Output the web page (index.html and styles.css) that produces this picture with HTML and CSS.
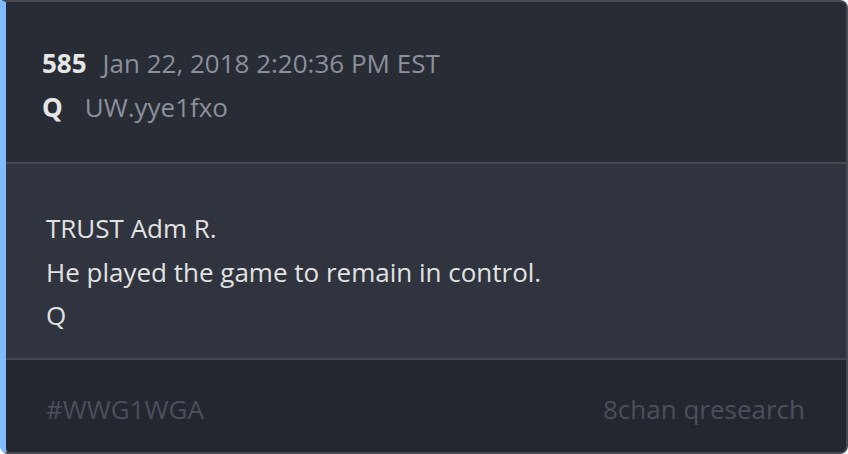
FILE: index.html
```html
<!DOCTYPE html>
<html>
<head>
<meta charset="utf-8">
<link rel="stylesheet" href="styles.css">
</head>
<body>
<div class="card">
  <div class="head">
    <div class="row"><span class="num">585</span><span class="meta">Jan 22, 2018 2:20:36 PM EST</span></div>
    <div class="row"><span class="num q">Q</span><span class="meta">UW.yye1fxo</span></div>
  </div>
  <div class="body">
    <p>TRUST Adm R.</p>
    <p>He played the game to remain in control.</p>
    <p>Q</p>
  </div>
  <div class="foot">
    <span>#WWG1WGA</span>
    <span>8chan qresearch</span>
  </div>
</div>
</body>
</html>
```
FILE: styles.css
```css
html, body { margin: 0; padding: 0; background: #ffffff; }
body { width: 848px; height: 454px; font-family: "Open Sans", "DejaVu Sans", sans-serif; }
.card {
  box-sizing: border-box;
  width: 848px;
  height: 454px;
  border: 2px solid #464a53;
  border-left: 6px solid #7dbcff;
  border-radius: 0 8px 8px 8px;
  background: #2f343e;
  display: flex;
  flex-direction: column;
  overflow: hidden;
}
.head {
  background: #282c35;
  height: 162px;
  flex: none;
  box-sizing: border-box;
  padding: 39px 0 0 36px;
  border-bottom: 2px solid #434852;
}
.row { display: flex; align-items: baseline; height: 44px; line-height: 44px; font-size: 26px; }
.num { color: #e6e6e6; font-weight: 700; margin-right: 16px; }
.q { margin-right: 22px; }
.meta { color: #8b909b; }
.body {
  height: 196px;
  flex: none;
  box-sizing: border-box;
  padding: 43px 0 0 40px;
  border-bottom: 2px solid #434852;
  color: #e2e2e2;
  font-size: 26px;
  line-height: 43.5px;
}
.body p { margin: 0; }
.foot {
  flex: 1;
  background: #24272f;
  display: flex;
  justify-content: space-between;
  align-items: center;
  padding: 6px 41px 0 40px;
  color: #4b505b;
  font-size: 26px;
}
```
